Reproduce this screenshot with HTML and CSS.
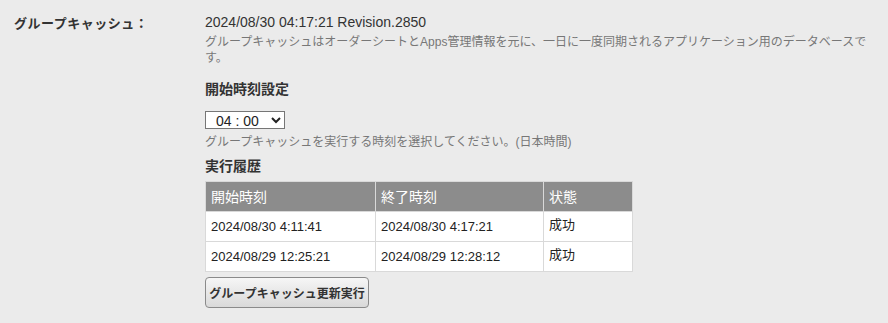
FILE: index.html
```html
<!DOCTYPE html>
<html lang="ja">
<head>
<meta charset="utf-8">
<link rel="stylesheet" href="styles.css">
</head>
<body>
<div class="row">
  <div class="label">グループキャッシュ：</div>
  <div class="content">
    <div class="rev">2024/08/30 04:17:21 Revision.2850</div>
    <p class="desc">グループキャッシュはオーダーシートとApps管理情報を元に、一日に一度同期されるアプリケーション用のデータベースです。</p>
    <h3 class="sub">開始時刻設定</h3>
    <select class="time"><option>04 : 00</option></select>
    <p class="hint">グループキャッシュを実行する時刻を選択してください。(日本時間)</p>
    <h3 class="sub sub2">実行履歴</h3>
    <table class="hist">
      <thead>
        <tr><th class="c1">開始時刻</th><th class="c2">終了時刻</th><th class="c3">状態</th></tr>
      </thead>
      <tbody>
        <tr><td>2024/08/30 4:11:41</td><td>2024/08/30 4:17:21</td><td class="st">成功</td></tr>
        <tr><td>2024/08/29 12:25:21</td><td>2024/08/29 12:28:12</td><td class="st">成功</td></tr>
      </tbody>
    </table>
    <button class="run">グループキャッシュ更新実行</button>
  </div>
</div>
</body>
</html>
```
FILE: styles.css
```css
html, body {
  margin: 0;
  padding: 0;
  background: #ebebeb;
}
body {
  font-family: "Liberation Sans", "Noto Sans CJK JP", sans-serif;
  color: #333;
  width: 888px;
  height: 323px;
  overflow: hidden;
}
.row {
  display: flex;
  padding-top: 12px;
}
.label {
  width: 191px;
  padding-left: 14px;
  font-size: 13px;
  font-weight: bold;
  line-height: 24px;
  letter-spacing: 0.5px;
  color: #333;
}
.content {
  flex: 1;
  padding-right: 20px;
}
.rev {
  font-size: 14px;
  line-height: 20px;
  color: #333;
}
.desc {
  margin: 2px 0 0;
  font-size: 12px;
  line-height: 16px;
  color: #777;
}
.sub {
  margin: 13px 0 0;
  font-size: 14px;
  font-weight: bold;
  line-height: 20px;
  color: #333;
}
.time {
  display: block;
  margin-top: 12px;
  width: 80px;
  height: 18px;
  font-family: "Liberation Sans", sans-serif;
  font-size: 14px;
  padding: 0 0 0 6px;
  border: 1px solid #767676;
  border-radius: 0;
  background: #fff;
  color: #222;
}
.hint {
  margin: 5px 0 0;
  font-size: 12px;
  line-height: 16px;
  color: #777;
}
.sub2 {
  margin-top: 6px;
}
.hist {
  margin-top: 5px;
  border-collapse: collapse;
  width: 428px;
  font-size: 13px;
}
.hist th, .hist td {
  border: 1px solid #d9d9d9;
  line-height: 18px;
  padding: 6px 5px 5px;
  text-align: left;
  font-weight: normal;
}
.hist th {
  background: #8c8c8c;
  color: #fff;
  font-size: 14px;
}
.hist td {
  background: #fff;
  color: #222;
}
.hist td.st {
  padding: 4px 5px 7px;
  font-size: 13px;
}
.hist .c1 { width: 159px; }
.hist .c2 { width: 157px; }
.run {
  display: block;
  margin-top: 5px;
  width: 164px;
  height: 31px;
  font-family: "Liberation Sans", "Noto Sans CJK JP", sans-serif;
  font-size: 12px;
  font-weight: bold;
  color: #333;
  border: 1px solid #8a8a8a;
  border-radius: 4px;
  background: linear-gradient(#f6f6f6, #d9d9d9);
  padding: 0;
}
```
